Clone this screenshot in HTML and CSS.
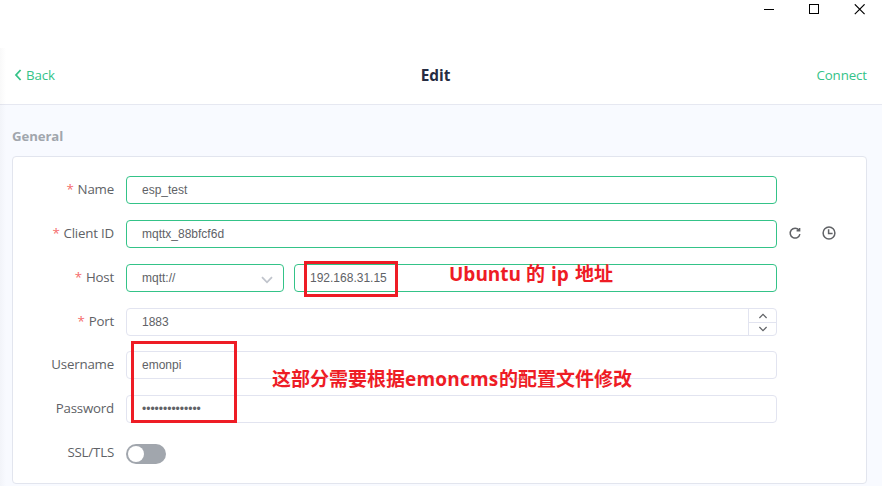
FILE: index.html
```html
<!DOCTYPE html>
<html lang="en">
<head>
<meta charset="utf-8">
<title>Edit</title>
<link rel="stylesheet" href="styles.css">
</head>
<body>
<div class="window">
  <div class="titlebar">
    <svg width="11" height="11" viewBox="0 0 11 11"><path d="M0 5.5H10"/></svg>
    <svg width="11" height="11" viewBox="0 0 11 11"><rect x=".5" y=".5" width="9" height="9"/></svg>
    <svg width="11" height="11" viewBox="0 0 11 11"><path class="close" d="M.8 .3L10.6 10.1M10.6 .3L.8 10.1"/></svg>
  </div>
  <header class="topbar">
    <a class="back"><svg width="8" height="12" viewBox="0 0 8 12"><path d="M6.6 1L2 6L6.6 11"/></svg><span>Back</span></a>
    <h1>Edit</h1>
    <a class="connect">Connect</a>
  </header>
  <main>
    <h2>General</h2>
    <section class="card">
      <div class="row"><label class="req">Name</label><div class="input valid">esp_test</div></div>
      <div class="row"><label class="req">Client ID</label><div class="input valid">mqttx_88bfcf6d</div>
        <div class="tools">
          <svg width="14" height="14" viewBox="0 0 14 14"><path d="M11 4.2A4.9 4.9 0 1 0 11.9 8.2M11.6 2V4.8H8.6"/></svg>
          <svg width="14" height="14" viewBox="0 0 14 14"><circle cx="7" cy="7" r="5.9"/><path d="M6.6 3.2V7.5H10.6"/></svg>
        </div>
      </div>
      <div class="row"><label class="req">Host</label>
        <div class="pair">
          <div class="input valid select">mqtt://<svg width="12" height="8" viewBox="0 0 12 8"><path d="M1 1.2L6 6.3L11 1.2"/></svg></div>
          <div class="input valid address">192.168.31.15</div>
        </div>
      </div>
      <div class="row short"><label class="req">Port</label>
        <div class="input number">1883
          <div class="stepper">
            <span><svg width="10" height="6" viewBox="0 0 10 6"><path d="M1.4 5L5 1.4L8.6 5"/></svg></span>
            <span><svg width="10" height="6" viewBox="0 0 10 6"><path d="M1.4 1L5 4.6L8.6 1"/></svg></span>
          </div>
        </div>
      </div>
      <div class="row"><label>Username</label><div class="input">emonpi</div></div>
      <div class="row"><label>Password</label><div class="input">••••••••••••••</div></div>
      <div class="row"><label>SSL/TLS</label><div class="switch"></div></div>
    </section>
  </main>
  <div class="mark mark-host"></div>
  <div class="mark mark-login"></div>
  <p class="note note-host"><span class="ubuntu">Ubuntu</span><span class="han">的</span><span class="ip">ip</span><span>地址</span></p>
  <p class="note note-login"><span>这部分需要根据</span><span class="cms">emoncms</span><span>的配置文件修改</span></p>
</div>
</body>
</html>
```
FILE: styles.css
```css
* { box-sizing: border-box; }
body { margin: 0; background: #fff; overflow: hidden; font-family: "Open Sans", "Noto Sans", sans-serif; color: #606266; }
svg { fill: none; display: block; flex: none; }
.window { position: relative; width: 882px; height: 486px; overflow: hidden; }
.window::before { content: ""; position: absolute; left: 0; top: 48px; bottom: 0; width: 6px; background: linear-gradient(90deg, rgba(60,60,70,.03), transparent); }
.titlebar { height: 46px; padding: 4px 17px 0 0; display: flex; justify-content: flex-end; gap: 34px; }
.titlebar svg { stroke: #000; stroke-width: 1; }
.titlebar .close { stroke-width: 1.15; }
.topbar { height: 59px; padding: 0 15px 0 14px; border-bottom: 1px solid #e6e8f1; display: grid; grid-template-columns: 1fr auto 1fr; align-items: center; font-size: 13.3px; letter-spacing: -.1px; color: #34c388; }
.topbar h1 { margin: 2px 0 0; font-size: 15.4px; line-height: 20px; color: #262c42; position: relative; left: -5px; letter-spacing: 0; }
.back { display: flex; align-items: center; gap: 4px; }
.back svg { stroke: #34c388; stroke-width: 1.8; }
.connect { justify-self: end; }
main { background: #f8faff; height: 381px; padding: 22px 15px 0 12px; }
h2 { margin: 0 0 11px; font-size: 13.2px; letter-spacing: -.1px; line-height: 18px; color: #a1a6ad; }
.card { height: 328px; background: #fff; border: 1px solid #e2e5ee; border-radius: 4px; padding-top: 19px; }
.row { height: 28px; margin-bottom: 16px; display: flex; align-items: center; }
.row.short { margin-bottom: 15px; }
label { width: 101px; flex: none; text-align: right; font-size: 13.3px; letter-spacing: -.2px; line-height: 26px; height: 28px; white-space: nowrap; }
.req::before { content: "*"; color: #f56c6c; margin-right: 4px; }
.input { width: 651px; height: 28px; margin-left: 12px; padding-left: 15px; border: 1px solid #e2e4f0; border-radius: 4px; background: #fff; font: 12px/26px "Liberation Sans", Arial, sans-serif; letter-spacing: 0; flex: none; }
.valid { border-color: #34c388; }
.tools { display: flex; gap: 20px; margin-left: 11px; margin-top: -2px; }
.tools svg { stroke: #606266; stroke-width: 1.5; }
.pair { display: flex; gap: 10px; margin-left: 12px; }
.pair .input { margin: 0; }
.pair .select { width: 158px; display: flex; justify-content: space-between; align-items: center; padding-right: 10px; }
.select svg { stroke: #c0c4cc; stroke-width: 1.8; margin-top: 3px; }
.pair .address { width: 483px; }
.number { display: flex; justify-content: space-between; }
.stepper { width: 28px; border-left: 1px solid #e2e4f0; display: grid; grid-template-rows: 14px 12px; }
.stepper span { display: grid; place-items: center; }
.stepper span:first-child { border-bottom: 1px solid #e2e4f0; }
.stepper svg { stroke: #606266; stroke-width: 1.2; }
.switch { width: 40px; height: 20px; margin: 2px 0 0 12px; padding: 2px; border-radius: 10px; background: #a1a6ad; }
.switch::before { content: ""; display: block; width: 16px; height: 16px; border-radius: 50%; background: #fff; }
.mark { position: absolute; border: 3px solid #ee1c25; }
.mark-host { left: 304px; top: 261px; width: 94px; height: 36px; }
.mark-login { left: 131px; top: 341px; width: 106px; height: 82px; }
.note { position: absolute; margin: 0; display: flex; white-space: nowrap; color: #ee1c25; font: bold 19px/28px "Open Sans", "Noto Sans CJK SC", sans-serif; }
.note-host { left: 449px; top: 260px; }
.note-login { left: 272px; top: 365px; }
.ubuntu { width: 77px; }
.han { width: 25px; }
.ip { width: 24px; }
.cms { width: 94px; letter-spacing: .2px; }
```
